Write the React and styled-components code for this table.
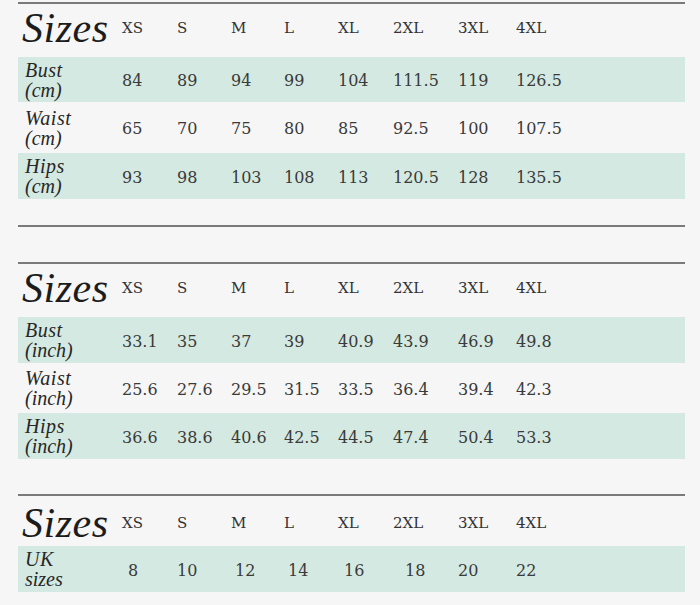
import React from "react"
import styled, { createGlobalStyle } from "styled-components"

const Global = createGlobalStyle`
  html, body {
    margin: 0;
    padding: 0;
    background: #f6f6f6;
  }
`

const Page = styled.div`
  width: 667px;
  padding: 2px 0 0 18px;
  display: flex;
  flex-direction: column;
`

const Rule = styled.div`
  height: 2px;
  background: #7a7a7a;
  margin-top: ${(p) => p.$gap || 0}px;
`

const Grid = styled.div`
  display: grid;
  grid-template-columns: 104px 55px 54px 53px 54px 55px 65px 58px 1fr;
  align-items: center;
  height: ${(p) => p.$h}px;
  background: ${(p) => (p.$band ? "#d4e9e1" : "transparent")};
`

const Title = styled.div`
  font-family: "Liberation Serif", "DejaVu Serif", serif;
  font-style: italic;
  font-size: 42px;
  line-height: 1;
  color: #1c1c1c;
  padding-left: 4px;
  margin-top: ${(p) => p.$up ?? -6}px;
  letter-spacing: 0.5px;
`

const Label = styled.div`
  font-family: "Liberation Serif", "DejaVu Serif", serif;
  font-style: italic;
  font-size: 20px;
  line-height: 20px;
  color: #262626;
  padding-left: 7px;
  display: flex;
  flex-direction: column;
  span:first-child {
    letter-spacing: 0.5px;
  }
`

const Head = styled.div`
  font-family: "DejaVu Serif", "Liberation Serif", serif;
  font-size: 15px;
  color: #333;
  margin-top: ${(p) => p.$up ?? -6}px;
`

const Cell = styled.div`
  font-family: "DejaVu Serif", "Liberation Serif", serif;
  font-size: 16px;
  color: #3a3a3a;
  padding-left: ${(p) => p.$pad || 0}px;
  margin-top: 2px;
`

const sizes = ["XS", "S", "M", "L", "XL", "2XL", "3XL", "4XL"]

const cmRows = [
  { name: "Bust", unit: "(cm)", h: 45, band: true, v: ["84", "89", "94", "99", "104", "111.5", "119", "126.5"] },
  { name: "Waist", unit: "(cm)", h: 51, v: ["65", "70", "75", "80", "85", "92.5", "100", "107.5"] },
  { name: "Hips", unit: "(cm)", h: 46, band: true, v: ["93", "98", "103", "108", "113", "120.5", "128", "135.5"] },
]

const inchRows = [
  { name: "Bust", unit: "(inch)", h: 46, band: true, v: ["33.1", "35", "37", "39", "40.9", "43.9", "46.9", "49.8"] },
  { name: "Waist", unit: "(inch)", h: 50, v: ["25.6", "27.6", "29.5", "31.5", "33.5", "36.4", "39.4", "42.3"] },
  { name: "Hips", unit: "(inch)", h: 46, band: true, v: ["36.6", "38.6", "40.6", "42.5", "44.5", "47.4", "50.4", "53.3"] },
]

const ukPad = [6, 0, 4, 4, 6, 12, 0, 0]

const Header = ({ h, up }) => (
  <Grid $h={h}>
    <Title $up={up}>Sizes</Title>
    {sizes.map((s) => (
      <Head key={s} $up={up}>{s}</Head>
    ))}
  </Grid>
)

const Row = ({ row, pads }) => (
  <Grid $h={row.h} $band={row.band}>
    <Label>
      <span>{row.name}</span>
      <span>{row.unit}</span>
    </Label>
    {row.v.map((x, i) => (
      <Cell key={i} $pad={pads ? pads[i] : 0}>{x}</Cell>
    ))}
  </Grid>
)

export default function App() {
  return (
    <>
      <Global />
      <Page>
        <Rule />
        <Header h={53} />
        {cmRows.map((r) => (
          <Row key={r.name} row={r} />
        ))}
        <Rule $gap={26} />
        <Rule $gap={35} />
        <Header h={53} />
        {inchRows.map((r) => (
          <Row key={r.name} row={r} />
        ))}
        <Rule $gap={35} />
        <Header h={50} up={4} />
        <Row pads={ukPad} row={{ name: "UK", unit: "sizes", h: 46, band: true, v: ["8", "10", "12", "14", "16", "18", "20", "22"] }} />
      </Page>
    </>
  )
}
